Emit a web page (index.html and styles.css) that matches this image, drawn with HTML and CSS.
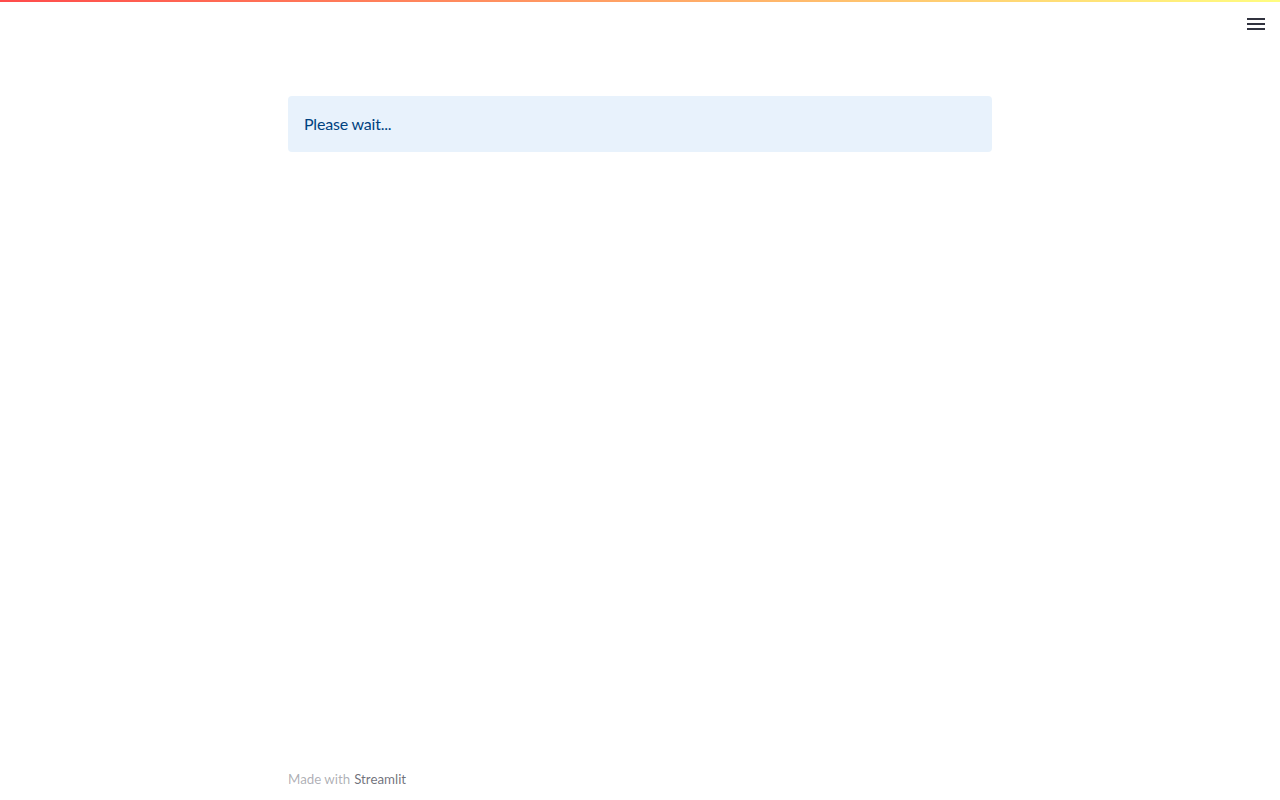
FILE: index.html
```html
<!DOCTYPE html>
<html>
<head>
<meta charset="utf-8">
<link rel="stylesheet" href="styles.css">
</head>
<body>
<div class="decoration"></div>
<header class="header">
  <button class="menu" aria-label="menu">
    <svg width="24" height="24" viewBox="0 0 24 24"><path d="M3 18h18v-2H3v2zm0-5h18v-2H3v2zm0-7v2h18V6H3z" fill="#31333f"/></svg>
  </button>
</header>
<main class="main">
  <div class="block">
    <div class="alert">Please wait...</div>
  </div>
  <footer class="footer">Made with <span class="brand">Streamlit</span></footer>
</main>
</body>
</html>
```
FILE: styles.css
```css
* { box-sizing: border-box; }
html, body { margin: 0; padding: 0; height: 100%; }
body {
  font-family: "Lato", "Open Sans", sans-serif;
  background: #ffffff;
  color: #31333f;
  display: flex;
  flex-direction: column;
}
.decoration {
  height: 2px;
  background: linear-gradient(90deg, #ff4b4b, #fffd80);
  flex: none;
}
.header {
  position: absolute;
  top: 2px;
  right: 0;
  padding: 10px 12px;
}
.menu {
  border: none;
  background: none;
  padding: 0;
  width: 24px;
  height: 24px;
  display: block;
}
.menu svg { display: block; }
.main {
  flex: 1;
  display: flex;
  flex-direction: column;
  width: 704px;
  margin: 0 auto;
}
.block {
  flex: 1;
  padding-top: 94px;
}
.alert {
  background: rgba(28, 131, 225, 0.1);
  color: #004280;
  border-radius: 4px;
  height: 56px;
  padding: 0 16px 2px;
  display: flex;
  align-items: center;
  font-size: 16px;
  letter-spacing: -0.2px;
}
.footer {
  font-size: 13.3px;
  color: rgba(49, 51, 63, 0.4);
  padding: 2px 0 12px;
  height: 33px;
  display: flex;
  align-items: center;
}
.brand { color: rgba(49, 51, 63, 0.7); margin-left: 4px; }
```
